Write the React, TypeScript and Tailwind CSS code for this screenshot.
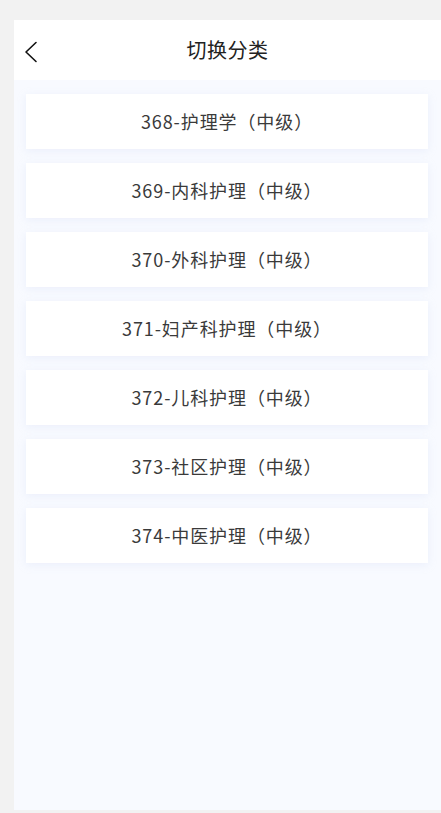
import React from 'react';

const categories = [
  '368-护理学（中级）',
  '369-内科护理（中级）',
  '370-外科护理（中级）',
  '371-妇产科护理（中级）',
  '372-儿科护理（中级）',
  '373-社区护理（中级）',
  '374-中医护理（中级）',
];

const font = { fontFamily: '"Noto Sans CJK SC", "Noto Sans", sans-serif' };

export default function App() {
  return (
    <div className="w-[441px] h-[813px] bg-[#f2f2f2] pt-5 pl-[14px] pb-[3px] flex flex-col" style={font}>
      <div className="flex-1 flex flex-col bg-[#f8faff]">
        <header className="relative h-[60px] bg-white flex items-center justify-center shrink-0">
          <button className="absolute left-[10px] top-[21px] w-[14px] h-[22px] flex items-center justify-center">
            <svg width="14" height="22" viewBox="0 0 14 22" fill="none">
              <path d="M12 1.5L2 11l10 9.5" stroke="#111" strokeWidth="1.6" strokeLinecap="round" strokeLinejoin="round" />
            </svg>
          </button>
          <h1 className="text-[20px] text-[#222] font-normal leading-none tracking-[0.5px]">切换分类</h1>
        </header>
        <div className="flex flex-col gap-[14px] pt-[14px] pl-3 pr-[13px]">
          {categories.map((c) => (
            <div
              key={c}
              className="h-[55px] bg-white flex items-center justify-center text-[18px] text-[#3a3a3a] tracking-[0.9px] shadow-[0_2px_8px_rgba(200,210,240,0.25)]"
            >
              {c}
            </div>
          ))}
        </div>
      </div>
    </div>
  );
}
